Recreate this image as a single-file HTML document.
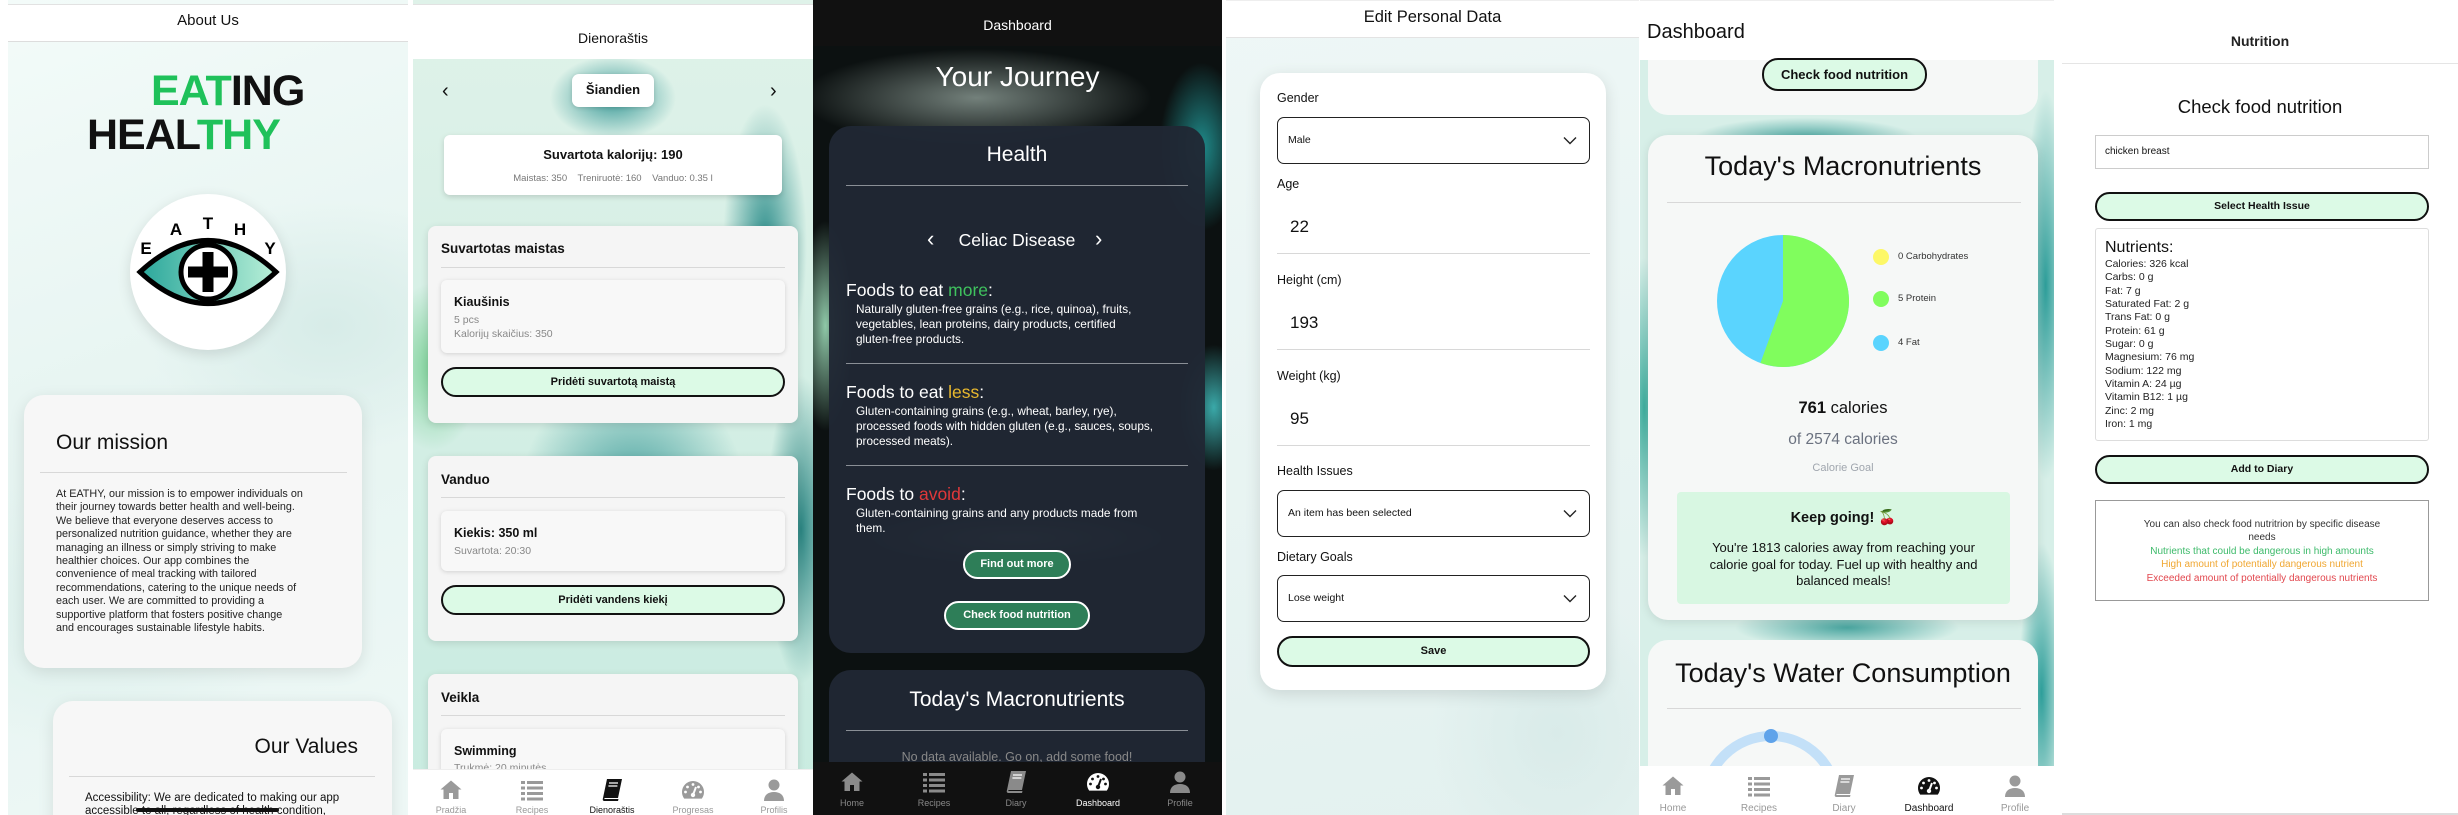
<!DOCTYPE html>
<html><head><meta charset="utf-8">
<style>
*{box-sizing:border-box;margin:0;padding:0}
html,body{width:2458px;height:815px;overflow:hidden}
body{position:relative;background:#fff;font-family:"Liberation Sans",sans-serif;color:#111}
.p{position:absolute;top:0;height:815px;overflow:hidden}
.a{position:absolute;white-space:nowrap;line-height:1.2}
.c{text-align:center}
.hr{position:absolute;height:1px;background:#d8d8d8}
.btn{position:absolute;border:2px solid #111;border-radius:16px;background:#dcfae6;font-weight:bold;text-align:center;font-size:11px}
.nav{position:absolute;left:0;right:0;bottom:0}
.ni{position:absolute;width:24px;height:24px}
.nl{position:absolute;font-size:9px;text-align:center;width:70px}
</style></head><body>
<svg width="0" height="0" style="position:absolute">
<defs>
<symbol id="home" viewBox="0 0 24 24"><path d="M12 2.5 1.5 11.5h3V21h5.5v-6h4v6h5.5v-9.5h3z"/></symbol>
<symbol id="list" viewBox="0 0 24 24"><rect x="1" y="3" width="4" height="3"/><rect x="7" y="3" width="16" height="3"/><rect x="1" y="8.5" width="4" height="3"/><rect x="7" y="8.5" width="16" height="3"/><rect x="1" y="14" width="4" height="3"/><rect x="7" y="14" width="16" height="3"/><rect x="1" y="19.5" width="4" height="3"/><rect x="7" y="19.5" width="16" height="3"/></symbol>
<symbol id="book" viewBox="0 0 24 24"><path d="M7 1h15l-4 19H3z M3 20c-1 3 1 3 2 3h13l.5-2H5c-1 0 -1-1 0-1z"/><path d="M9 5h9M8.4 8h9" stroke="#fff" stroke-width="1.3"/></symbol>
<symbol id="gauge" viewBox="0 0 24 24"><path d="M12 3a11 11 0 0 0-11 11c0 2.5.8 4.8 2.2 6.6h17.6A11 11 0 0 0 23 14 11 11 0 0 0 12 3z"/><circle cx="12" cy="6.5" r="1.4" fill="#fff"/><circle cx="6.5" cy="9" r="1.4" fill="#fff"/><circle cx="17.5" cy="9" r="1.4" fill="#fff"/><circle cx="4.5" cy="14" r="1.4" fill="#fff"/><circle cx="19.5" cy="14" r="1.4" fill="#fff"/><path d="M12 17 15 9" stroke="#fff" stroke-width="2"/><circle cx="12" cy="17" r="2.2" fill="#fff"/></symbol>
<symbol id="gauge2" viewBox="0 0 24 24"><path d="M12 3a11 11 0 0 0-11 11c0 2.5.8 4.8 2.2 6.6h17.6A11 11 0 0 0 23 14 11 11 0 0 0 12 3z" fill="#fff"/><circle cx="12" cy="6.5" r="1.4" fill="#111"/><circle cx="6.5" cy="9" r="1.4" fill="#111"/><circle cx="17.5" cy="9" r="1.4" fill="#111"/><circle cx="4.5" cy="14" r="1.4" fill="#111"/><circle cx="19.5" cy="14" r="1.4" fill="#111"/><path d="M12 17 15 9" stroke="#111" stroke-width="2"/><circle cx="12" cy="17" r="2.2" fill="#111"/></symbol>
<symbol id="user" viewBox="0 0 24 24"><circle cx="12" cy="7" r="5.5"/><path d="M2 23c0-6 4-9 10-9s10 3 10 9z"/></symbol>
</defs></svg>

<!-- PANEL 1 -->
<div class="p" style="left:8px;width:400px;background:radial-gradient(ellipse 260px 180px at 80% 40%,#d7ece8 0,transparent 70%),radial-gradient(ellipse 300px 200px at 20% 75%,#ddf0ec 0,transparent 70%),linear-gradient(160deg,#f3fbf9,#e6f4f1 50%,#eef8f6)">
  <div style="position:absolute;left:0;width:400px;background:#fff;border-top:1px solid #e2e2e2;border-bottom:1px solid #ddd;top:4px;height:38px"></div>
  <div class="a c" style="left:0;width:400px;top:12px;font-size:15px">About Us</div>
  <div class="a" style="left:143px;top:66px;font-size:43px;font-weight:bold;line-height:1.2;letter-spacing:-1px"><span style="color:#1fc15a">EAT</span>ING</div>
  <div class="a" style="left:79px;top:110px;font-size:43px;font-weight:bold;line-height:1.2;letter-spacing:-1px">HEAL<span style="color:#1fc15a">THY</span></div>
  <div style="position:absolute;left:122px;top:194px;width:156px;height:156px;border-radius:50%;background:#fff;box-shadow:0 4px 14px rgba(0,0,0,.12)"></div>
  <svg style="position:absolute;left:122px;top:194px" width="156" height="156" viewBox="0 0 156 156">
    <defs><linearGradient id="eg" x1="0" x2="1"><stop offset="0" stop-color="#2aa79b"/><stop offset="1" stop-color="#b9f0d8"/></linearGradient></defs>
    <g font-family="Liberation Sans" font-weight="bold" font-size="17" text-anchor="middle">
      <text x="16" y="60">E</text><text x="46" y="41">A</text><text x="78" y="35">T</text><text x="110" y="41">H</text><text x="140" y="60">Y</text></g>
    <path d="M10 78 Q78 15 146 78 Q78 141 10 78z" fill="url(#eg)" stroke="#000" stroke-width="5"/>
    <circle cx="78" cy="78" r="27" fill="#fff" stroke="#000" stroke-width="5"/>
    <path d="M78 58v40M58 78h40" stroke="#000" stroke-width="11"/>
  </svg>
  <div style="position:absolute;left:16px;top:395px;width:338px;height:273px;border-radius:20px;background:#f7f7f7;box-shadow:0 4px 16px rgba(0,0,0,.1)"></div>
  <div class="a" style="left:48px;top:430px;font-size:21px">Our mission</div>
  <div class="hr" style="left:32px;top:472px;width:307px"></div>
  <div class="a" style="left:48px;top:488px;font-size:10.8px;line-height:13.4px;color:#222">At EATHY, our mission is to empower individuals on<br>their journey towards better health and well-being.<br>We believe that everyone deserves access to<br>personalized nutrition guidance, whether they are<br>managing an illness or simply striving to make<br>healthier choices. Our app combines the<br>convenience of meal tracking with tailored<br>recommendations, catering to the unique needs of<br>each user. We are committed to providing a<br>supportive platform that fosters positive change<br>and encourages sustainable lifestyle habits.</div>
  <div style="position:absolute;left:45px;top:701px;width:339px;height:200px;border-radius:20px;background:#f7f7f7;box-shadow:0 4px 16px rgba(0,0,0,.1)"></div>
  <div class="a" style="right:50px;top:734px;font-size:21px">Our Values</div>
  <div class="hr" style="left:61px;top:776px;width:306px"></div>
  <div class="a" style="left:77px;top:792px;font-size:11.5px;line-height:13.4px">Accessibility: We are dedicated to making our app<br>accessible to all, regardless of health condition,</div>
  <div style="position:absolute;left:128px;top:808px;width:143px;height:4px;border-radius:2px;background:#111"></div>
</div>

<!-- PANEL 2 -->
<div class="p" style="left:413px;width:400px;background:radial-gradient(ellipse 60px 200px at 88% 30%,#2f8f8c 0,transparent 70%),radial-gradient(ellipse 90px 60px at 50% 12%,#3a9a98 0,transparent 70%),radial-gradient(ellipse 50px 220px at 97% 65%,#2b8582 0,transparent 70%),radial-gradient(ellipse 70px 120px at 5% 45%,#7fd29a 0,transparent 70%),radial-gradient(ellipse 160px 160px at 55% 60%,#4aa3a0 0,transparent 70%),linear-gradient(180deg,#dff2e9,#c8ebe0)">
  <div style="position:absolute;left:0;top:4px;width:400px;height:55px;background:#fff;border-top:1px solid #e2e2e2"></div>
  <div class="a c" style="left:0;width:400px;top:30px;font-size:14px">Dienoraštis</div>
  <div class="a" style="left:29px;top:79px;font-size:20px">&#8249;</div>
  <div class="a" style="left:357px;top:79px;font-size:20px">&#8250;</div>
  <div style="position:absolute;left:159px;top:74px;width:82px;height:33px;background:#fff;border-radius:7px;box-shadow:0 1px 4px rgba(0,0,0,.15)"></div>
  <div class="a c" style="left:159px;width:82px;top:82px;font-size:13px;font-weight:bold">Šiandien</div>
  <div style="position:absolute;left:31px;top:135px;width:338px;height:60px;background:#fff;border-radius:6px;box-shadow:0 2px 6px rgba(0,0,0,.15)"></div>
  <div class="a c" style="left:31px;width:338px;top:147px;font-size:13px;font-weight:bold">Suvartota kalorijų: 190</div>
  <div class="a c" style="left:31px;width:338px;top:173px;font-size:9.5px;color:#777">Maistas: 350 &nbsp;&nbsp; Treniruotė: 160 &nbsp;&nbsp; Vanduo: 0.35 l</div>

  <div style="position:absolute;left:15px;top:226px;width:370px;height:197px;background:#f5f5f5;border-radius:8px;box-shadow:0 2px 8px rgba(0,0,0,.12)"></div>
  <div class="a" style="left:28px;top:241px;font-size:13.5px;font-weight:bold">Suvartotas maistas</div>
  <div class="hr" style="left:28px;top:267px;width:344px"></div>
  <div style="position:absolute;left:28px;top:280px;width:344px;height:73px;background:#f8f8f8;border-radius:6px;box-shadow:0 1px 5px rgba(0,0,0,.15)"></div>
  <div class="a" style="left:41px;top:295px;font-size:12.5px;font-weight:bold">Kiaušinis</div>
  <div class="a" style="left:41px;top:314px;font-size:10.5px;color:#888;line-height:13.5px">5 pcs<br>Kalorijų skaičius: 350</div>
  <div class="btn" style="left:28px;top:367px;width:344px;height:30px;line-height:26px">Pridėti suvartotą maistą</div>

  <div style="position:absolute;left:15px;top:456px;width:370px;height:185px;background:#f5f5f5;border-radius:8px;box-shadow:0 2px 8px rgba(0,0,0,.12)"></div>
  <div class="a" style="left:28px;top:472px;font-size:13.5px;font-weight:bold">Vanduo</div>
  <div class="hr" style="left:28px;top:497px;width:344px"></div>
  <div style="position:absolute;left:28px;top:511px;width:344px;height:60px;background:#f8f8f8;border-radius:6px;box-shadow:0 1px 5px rgba(0,0,0,.15)"></div>
  <div class="a" style="left:41px;top:526px;font-size:12.5px;font-weight:bold">Kiekis: 350 ml</div>
  <div class="a" style="left:41px;top:545px;font-size:10.5px;color:#888">Suvartota: 20:30</div>
  <div class="btn" style="left:28px;top:585px;width:344px;height:30px;line-height:26px">Pridėti vandens kiekį</div>

  <div style="position:absolute;left:15px;top:674px;width:370px;height:141px;background:#f5f5f5;border-radius:8px 8px 0 0;box-shadow:0 2px 8px rgba(0,0,0,.12)"></div>
  <div class="a" style="left:28px;top:690px;font-size:13.5px;font-weight:bold">Veikla</div>
  <div class="hr" style="left:28px;top:715px;width:344px"></div>
  <div style="position:absolute;left:28px;top:729px;width:344px;height:70px;background:#f8f8f8;border-radius:6px;box-shadow:0 1px 5px rgba(0,0,0,.15)"></div>
  <div class="a" style="left:41px;top:744px;font-size:12.5px;font-weight:bold">Swimming</div>
  <div class="a" style="left:41px;top:762px;font-size:10.5px;color:#888">Trukmė: 20 minutės</div>

  <div class="nav" style="top:769px;background:#fff;border-top:1px solid #eee">
    <svg class="ni" style="left:26px;top:8px;fill:#9a9a9a"><use href="#home"/></svg>
    <svg class="ni" style="left:107px;top:8px;fill:#9a9a9a"><use href="#list"/></svg>
    <svg class="ni" style="left:187px;top:8px;fill:#111"><use href="#book"/></svg>
    <svg class="ni" style="left:268px;top:8px;fill:#9a9a9a"><use href="#gauge"/></svg>
    <svg class="ni" style="left:349px;top:8px;fill:#9a9a9a"><use href="#user"/></svg>
    <div class="nl" style="left:3px;top:35px;color:#999">Pradžia</div>
    <div class="nl" style="left:84px;top:35px;color:#999">Recipes</div>
    <div class="nl" style="left:164px;top:35px;color:#111">Dienoraštis</div>
    <div class="nl" style="left:245px;top:35px;color:#999">Progresas</div>
    <div class="nl" style="left:326px;top:35px;color:#999">Profilis</div>
  </div>
</div>

<!-- PANEL 3 -->
<div class="p" style="left:813px;width:409px;background:radial-gradient(ellipse 250px 70px at 40% 12%,rgba(200,220,210,.55) 0,transparent 70%),radial-gradient(ellipse 60px 120px at 95% 18%,#1f8a8a 0,transparent 70%),radial-gradient(ellipse 40px 150px at 3% 40%,#8fc8a8 0,transparent 70%),radial-gradient(ellipse 50px 90px at 98% 50%,#3aa9a9 0,transparent 70%),radial-gradient(ellipse 220px 40px at 50% 66%,rgba(200,220,200,.5) 0,transparent 70%),#0c1111">
  <div style="position:absolute;left:0;top:0;width:409px;height:46px;background:#111"></div>
  <div class="a c" style="left:0;width:409px;top:17px;font-size:14px;color:#fff">Dashboard</div>
  <div class="a c" style="left:0;width:409px;top:60px;font-size:28px;color:#fff">Your Journey</div>
  <div style="position:absolute;left:16px;top:126px;width:376px;height:527px;border-radius:22px;background:rgba(32,40,52,.96)"></div>
  <div class="a c" style="left:16px;width:376px;top:142px;font-size:21px;color:#fff">Health</div>
  <div class="hr" style="left:33px;top:185px;width:342px;background:#8a8f96"></div>
  <div class="a c" style="left:16px;width:376px;top:230px;font-size:17.5px;color:#fff">Celiac Disease</div>
  <div class="a" style="left:114px;top:226px;font-size:22px;color:#fff">&#8249;</div>
  <div class="a" style="left:282px;top:226px;font-size:22px;color:#fff">&#8250;</div>
  <div class="a" style="left:33px;top:280px;font-size:17.5px;color:#fff">Foods to eat <span style="color:#3fc25e">more</span>:</div>
  <div class="a" style="left:43px;top:302px;font-size:11.8px;line-height:14.8px;color:#fff">Naturally gluten-free grains (e.g., rice, quinoa), fruits,<br>vegetables, lean proteins, dairy products, certified<br>gluten-free products.</div>
  <div class="hr" style="left:33px;top:363px;width:342px;background:#8a8f96"></div>
  <div class="a" style="left:33px;top:382px;font-size:17.5px;color:#fff">Foods to eat <span style="color:#e8b82e">less</span>:</div>
  <div class="a" style="left:43px;top:404px;font-size:11.8px;line-height:14.8px;color:#fff">Gluten-containing grains (e.g., wheat, barley, rye),<br>processed foods with hidden gluten (e.g., sauces, soups,<br>processed meats).</div>
  <div class="hr" style="left:33px;top:465px;width:342px;background:#8a8f96"></div>
  <div class="a" style="left:33px;top:484px;font-size:17.5px;color:#fff">Foods to <span style="color:#e0383a">avoid</span>:</div>
  <div class="a" style="left:43px;top:506px;font-size:11.8px;line-height:14.8px;color:#fff">Gluten-containing grains and any products made from<br>them.</div>
  <div style="position:absolute;left:150px;top:550px;width:108px;height:29px;border-radius:15px;background:#2e7e58;border:2px solid #fff;color:#fff;font-weight:bold;font-size:11px;text-align:center;line-height:25px">Find out more</div>
  <div style="position:absolute;left:131px;top:601px;width:146px;height:29px;border-radius:15px;background:#2e7e58;border:2px solid #fff;color:#fff;font-weight:bold;font-size:11px;text-align:center;line-height:25px">Check food nutrition</div>
  <div style="position:absolute;left:16px;top:670px;width:376px;height:145px;border-radius:22px 22px 0 0;background:rgba(32,40,52,.96)"></div>
  <div class="a c" style="left:16px;width:376px;top:687px;font-size:21px;color:#fff">Today's Macronutrients</div>
  <div class="hr" style="left:33px;top:730px;width:342px;background:#8a8f96"></div>
  <div class="a c" style="left:16px;width:376px;top:750px;font-size:12.5px;color:#888">No data available. Go on, add some food!</div>
  <div class="nav" style="top:762px;background:#111">
    <svg class="ni" style="left:27px;top:8px;fill:#8a8a8a"><use href="#home"/></svg>
    <svg class="ni" style="left:109px;top:8px;fill:#8a8a8a"><use href="#list"/></svg>
    <svg class="ni" style="left:191px;top:8px;fill:#8a8a8a"><use href="#book"/></svg>
    <svg class="ni" style="left:273px;top:8px"><use href="#gauge2"/></svg>
    <svg class="ni" style="left:355px;top:8px;fill:#8a8a8a"><use href="#user"/></svg>
    <div class="nl" style="left:4px;top:36px;color:#888">Home</div>
    <div class="nl" style="left:86px;top:36px;color:#888">Recipes</div>
    <div class="nl" style="left:168px;top:36px;color:#888">Diary</div>
    <div class="nl" style="left:250px;top:36px;color:#fff">Dashboard</div>
    <div class="nl" style="left:332px;top:36px;color:#888">Profile</div>
  </div>
</div>

<!-- PANEL 4 -->
<div class="p" style="left:1226px;width:413px;background:radial-gradient(ellipse 200px 120px at 60% 20%,#e2efee 0,transparent 70%),radial-gradient(ellipse 180px 200px at 80% 90%,#d9ebe9 0,transparent 70%),linear-gradient(170deg,#eef7f6,#e3f1ef)">
  <div style="position:absolute;left:0;top:0;width:413px;height:38px;background:#fff;border-bottom:1px solid #e3e3e3;border-top:1px solid #eee"></div>
  <div class="a c" style="left:0;width:413px;top:8px;font-size:16.5px">Edit Personal Data</div>
  <div style="position:absolute;left:34px;top:73px;width:346px;height:617px;border-radius:20px;background:#fff;box-shadow:0 4px 16px rgba(0,0,0,.12)"></div>
  <div class="a" style="left:51px;top:91px;font-size:12.5px">Gender</div>
  <div style="position:absolute;left:51px;top:117px;width:313px;height:47px;border:1.5px solid #222;border-radius:7px"></div>
  <div class="a" style="left:62px;top:134px;font-size:10.5px">Male</div>
  <div class="a" style="left:51px;top:177px;font-size:12.5px">Age</div>
  <div class="a" style="left:64px;top:217px;font-size:17px">22</div>
  <div class="hr" style="left:51px;top:253px;width:313px"></div>
  <div class="a" style="left:51px;top:273px;font-size:12.5px">Height (cm)</div>
  <div class="a" style="left:64px;top:313px;font-size:17px">193</div>
  <div class="hr" style="left:51px;top:349px;width:313px"></div>
  <div class="a" style="left:51px;top:369px;font-size:12.5px">Weight (kg)</div>
  <div class="a" style="left:64px;top:409px;font-size:17px">95</div>
  <div class="hr" style="left:51px;top:445px;width:313px"></div>
  <div class="a" style="left:51px;top:464px;font-size:12.5px">Health Issues</div>
  <div style="position:absolute;left:51px;top:490px;width:313px;height:47px;border:1.5px solid #222;border-radius:7px"></div>
  <div class="a" style="left:62px;top:507px;font-size:10.5px">An item has been selected</div>
  <div class="a" style="left:51px;top:550px;font-size:12.5px">Dietary Goals</div>
  <div style="position:absolute;left:51px;top:575px;width:313px;height:47px;border:1.5px solid #222;border-radius:7px"></div>
  <div class="a" style="left:62px;top:592px;font-size:10.5px">Lose weight</div>
  <svg style="position:absolute;left:337px;top:136px" width="14" height="9"><path d="M1 1.5 7 7.5 13 1.5" fill="none" stroke="#222" stroke-width="1.4"/></svg>
  <svg style="position:absolute;left:337px;top:509px" width="14" height="9"><path d="M1 1.5 7 7.5 13 1.5" fill="none" stroke="#222" stroke-width="1.4"/></svg>
  <svg style="position:absolute;left:337px;top:594px" width="14" height="9"><path d="M1 1.5 7 7.5 13 1.5" fill="none" stroke="#222" stroke-width="1.4"/></svg>
  <div class="btn" style="left:51px;top:636px;width:313px;height:31px;line-height:27px">Save</div>
</div>

<!-- PANEL 5 -->
<div class="p" style="left:1640px;width:414px;background:radial-gradient(ellipse 30px 260px at 98% 35%,#2e9e9a 0,transparent 75%),radial-gradient(ellipse 30px 200px at 1% 50%,#3fae9e 0,transparent 75%),radial-gradient(ellipse 160px 30px at 40% 17%,#4aa6a0 0,transparent 70%),radial-gradient(ellipse 160px 30px at 50% 77%,#4aa6a0 0,transparent 70%),radial-gradient(ellipse 30px 200px at 97% 85%,#2e9e9a 0,transparent 75%),#d7efe8">
  <div style="position:absolute;left:0;top:0;width:414px;height:60px;background:#fff;border-top:1px solid #eee"></div>
  <div class="a" style="left:7px;top:20px;font-size:20px">Dashboard</div>
  <div style="position:absolute;left:8px;top:40px;width:390px;height:75px;border-radius:20px;background:#f6f8f7"></div>
  <div style="position:absolute;left:0;top:40px;width:414px;height:20px;background:#fff"></div>
  <div class="btn" style="left:122px;top:58px;width:165px;height:33px;line-height:29px;font-size:13px;font-weight:600">Check food nutrition</div>
  <div style="position:absolute;left:8px;top:135px;width:390px;height:485px;border-radius:20px;background:#f6f8f7;box-shadow:0 2px 10px rgba(0,0,0,.1)"></div>
  <div class="a c" style="left:8px;width:390px;top:150px;font-size:27px">Today's Macronutrients</div>
  <div class="hr" style="left:27px;top:202px;width:354px"></div>
  <svg style="position:absolute;left:77px;top:235px" width="132" height="132" viewBox="-66 -66 132 132">
    <circle r="66" fill="#5ad4fe"/>
    <path d="M0 0V-66A66 66 0 1 1 -22.6 62Z" fill="#80fd5d"/>
  </svg>
  <div style="position:absolute;left:233px;top:249px;width:16px;height:16px;border-radius:50%;background:#fdf867"></div>
  <div style="position:absolute;left:233px;top:291px;width:16px;height:16px;border-radius:50%;background:#80fd5d"></div>
  <div style="position:absolute;left:233px;top:335px;width:16px;height:16px;border-radius:50%;background:#5ad4fe"></div>
  <div class="a" style="left:258px;top:251px;font-size:9.5px;color:#333">0 Carbohydrates</div>
  <div class="a" style="left:258px;top:293px;font-size:9.5px;color:#333">5 Protein</div>
  <div class="a" style="left:258px;top:337px;font-size:9.5px;color:#333">4 Fat</div>
  <div class="a c" style="left:8px;width:390px;top:399px;font-size:16.5px"><b>761</b> calories</div>
  <div class="a c" style="left:8px;width:390px;top:431px;font-size:15.5px;color:#6b7280">of 2574 calories</div>
  <div class="a c" style="left:8px;width:390px;top:462px;font-size:11px;color:#a0a6ae">Calorie Goal</div>
  <div style="position:absolute;left:37px;top:492px;width:333px;height:112px;background:#d8f7e2;border-radius:4px"></div>
  <div class="a c" style="left:37px;width:333px;top:510px;font-size:14.5px;font-weight:bold">Keep going! 🍒</div>
  <div class="a c" style="left:37px;width:333px;top:540px;font-size:13px;line-height:16.5px">You're 1813 calories away from reaching your<br>calorie goal for today. Fuel up with healthy and<br>balanced meals!</div>
  <div style="position:absolute;left:8px;top:640px;width:390px;height:175px;border-radius:20px 20px 0 0;background:#f6f8f7"></div>
  <div class="a c" style="left:8px;width:390px;top:657px;font-size:27px">Today's Water Consumption</div>
  <div class="hr" style="left:27px;top:708px;width:354px"></div>
  <svg style="position:absolute;left:60px;top:728px" width="142" height="40"><circle cx="71" cy="74" r="66" fill="none" stroke="#c3e0f8" stroke-width="10"/><circle cx="71" cy="8" r="7" fill="#5fa3ea"/></svg>
  <div class="nav" style="top:766px;background:#fff">
    <svg class="ni" style="left:21px;top:8px;fill:#9a9a9a"><use href="#home"/></svg>
    <svg class="ni" style="left:107px;top:8px;fill:#9a9a9a"><use href="#list"/></svg>
    <svg class="ni" style="left:192px;top:8px;fill:#9a9a9a"><use href="#book"/></svg>
    <svg class="ni" style="left:277px;top:8px;fill:#111"><use href="#gauge"/></svg>
    <svg class="ni" style="left:363px;top:8px;fill:#9a9a9a"><use href="#user"/></svg>
    <div class="nl" style="left:-2px;top:37px;color:#999;font-size:10px">Home</div>
    <div class="nl" style="left:84px;top:37px;color:#999;font-size:10px">Recipes</div>
    <div class="nl" style="left:169px;top:37px;color:#999;font-size:10px">Diary</div>
    <div class="nl" style="left:254px;top:37px;color:#111;font-size:10px">Dashboard</div>
    <div class="nl" style="left:340px;top:37px;color:#999;font-size:10px">Profile</div>
  </div>
</div>

<!-- PANEL 6 -->
<div class="p" style="left:2062px;width:396px;background:#fff">
  <div style="position:absolute;left:0;top:63px;width:396px;height:1px;background:#e5e5e5"></div>
  <div class="a c" style="left:0;width:396px;top:33px;font-size:14px;font-weight:bold;color:#222">Nutrition</div>
  <div class="a c" style="left:0;width:396px;top:96px;font-size:18.5px">Check food nutrition</div>
  <div style="position:absolute;left:33px;top:135px;width:334px;height:34px;border:1px solid #ccc"></div>
  <div class="a" style="left:43px;top:146px;font-size:10px">chicken breast</div>
  <div class="btn" style="left:33px;top:192px;width:334px;height:29px;line-height:25px;font-size:10.5px">Select Health Issue</div>
  <div style="position:absolute;left:33px;top:228px;width:334px;height:213px;border:1px solid #ddd;border-radius:3px"></div>
  <div class="a" style="left:43px;top:238px;font-size:16px">Nutrients:</div>
  <div class="a" style="left:43px;top:258px;font-size:10.5px;line-height:13.35px;color:#222">Calories: 326 kcal<br>Carbs: 0 g<br>Fat: 7 g<br>Saturated Fat: 2 g<br>Trans Fat: 0 g<br>Protein: 61 g<br>Sugar: 0 g<br>Magnesium: 76 mg<br>Sodium: 122 mg<br>Vitamin A: 24 µg<br>Vitamin B12: 1 µg<br>Zinc: 2 mg<br>Iron: 1 mg</div>
  <div class="btn" style="left:33px;top:455px;width:334px;height:29px;line-height:25px;font-size:10.5px">Add to Diary</div>
  <div style="position:absolute;left:33px;top:500px;width:334px;height:101px;border:1.5px solid #999"></div>
  <div class="a c" style="left:33px;width:334px;top:518px;font-size:10px;line-height:13.4px;color:#333">You can also check food nutritrion by specific disease<br>needs<br><span style="color:#3dba6a">Nutrients that could be dangerous in high amounts</span><br><span style="color:#f0a732">High amount of potentially dangerous nutrient</span><br><span style="color:#e2474e">Exceeded amount of potentially dangerous nutrients</span></div>
  <div style="position:absolute;left:0;top:813px;width:396px;height:2px;background:#ddd"></div>
</div>
</body></html>
